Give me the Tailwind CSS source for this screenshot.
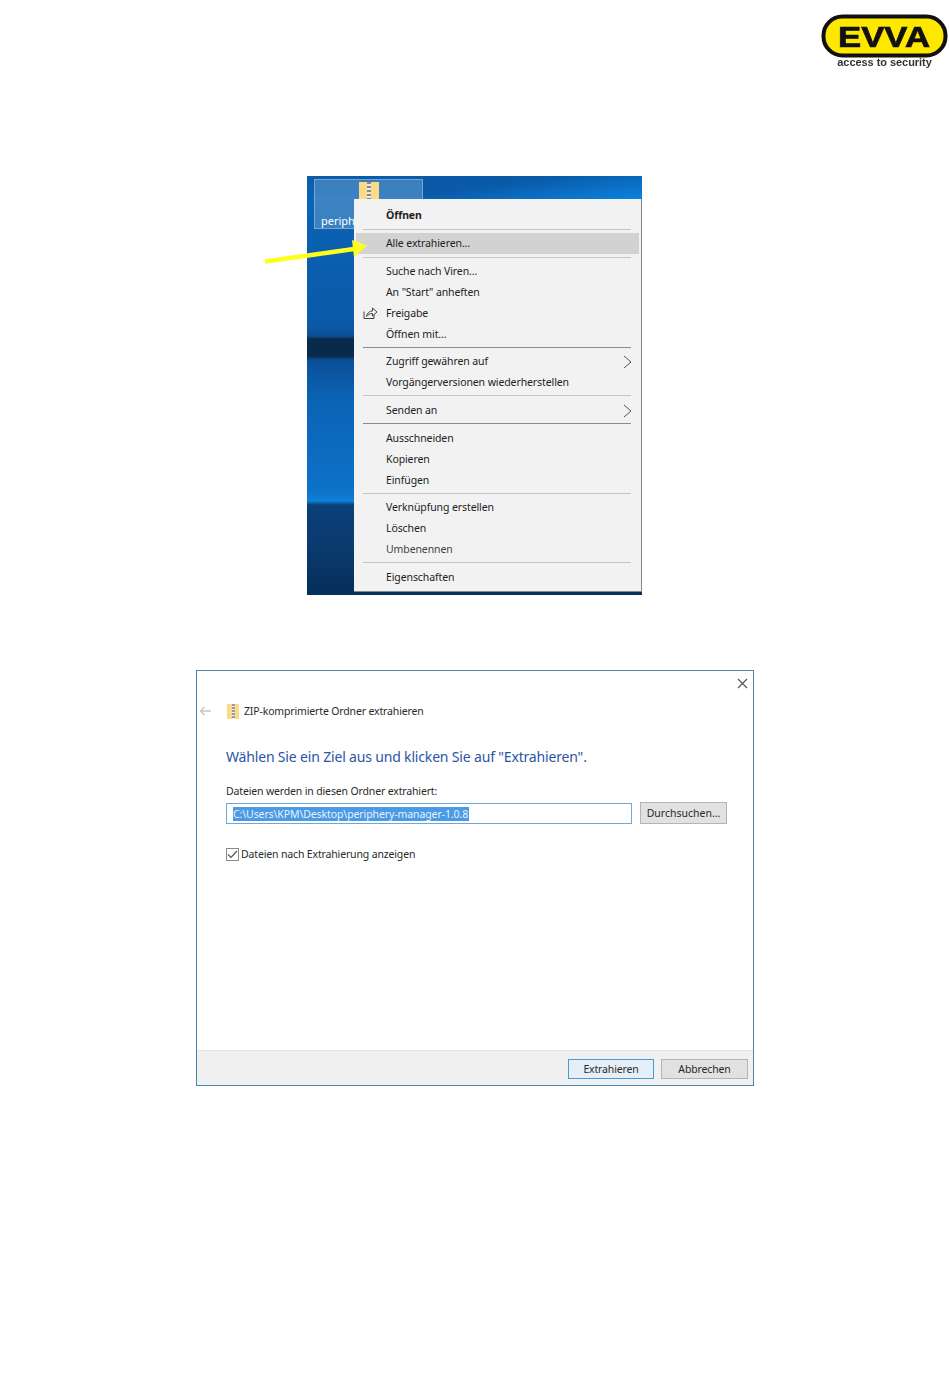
<!DOCTYPE html>
<html lang="de">
<head>
  <meta charset="UTF-8" />
  <title>periphery-manager extrahieren</title>
  <script src="https://cdn.jsdelivr.net/npm/@tailwindcss/browser@4"></script>
</head>
<body class="bg-white font-['Open_Sans',sans-serif] text-[#1a1a1a]">
  <div class="relative w-[950px] h-[1387px] flex flex-col items-center overflow-hidden">

    <!-- logo -->
    <header class="w-full h-[176px] flex justify-end pt-[14px] pr-[2px]">
      <div class="w-[127px] flex flex-col items-center blur-[0.4px]">
        <svg width="127" height="44" viewBox="0 0 127 44">
          <rect x="2.5" y="2.5" width="122" height="39" rx="19" fill="#ffe800" stroke="#111" stroke-width="4" />
          <text x="17" y="32.5" font-family="Liberation Sans" font-weight="700" font-size="29" textLength="92" lengthAdjust="spacingAndGlyphs" fill="#111" stroke="#111" stroke-width="0.7">EVVA</text>
        </svg>
        <span class="font-['Liberation_Sans',sans-serif] font-bold text-[11px] leading-[11px] mt-[-1px] tracking-[-0.05px] text-[#333]">access to security</span>
      </div>
    </header>

    <!-- context menu screenshot -->
    <section class="relative ml-[-1px] w-[335px] h-[419px] shrink-0 bg-[linear-gradient(180deg,#0a5ca8_0px,#0a64b4_22px,#0a5aa8_150px,#0b4f94_160px,#0a2a4c_163px,#0a2a4c_180px,#0b4f96_184px,#0b62b4_220px,#0d72c8_315px,#1080d8_325px,#0a3f78_329px,#0a3a70_370px,#06305a_415px)]">
      <div class="absolute left-[116px] top-0 w-[219px] h-[23px] bg-[linear-gradient(172deg,#0a5aa8_35%,#0a82de_100%)]"></div>
      <div class="absolute left-[7px] top-[3px] w-[109px] h-[50px] bg-white/20 border border-white/30 pl-[6px] pt-[34px] text-[11px] leading-[14px] text-white font-['Noto_Sans',sans-serif]">periph</div>
      <div class="absolute left-[52px] top-[6px] w-[20px] h-[17px] bg-[#fbdb85] flex justify-center">
        <div class="w-[4px] h-full bg-[repeating-linear-gradient(180deg,#8a8a8a_0px,#8a8a8a_2px,#e8e8e8_2px,#e8e8e8_4px)]"></div>
      </div>

      <div class="absolute left-[47px] top-[23px] w-[288px] h-[393px] bg-[#f2f2f2] border-r border-b border-[#7a8a99] pt-[6px] text-[10.5px] tracking-[-0.1px] text-[#222] font-['Noto_Sans',sans-serif]">
        <div class="h-[21px] pl-[32px] flex items-center font-bold">Öffnen</div>
        <div class="mt-[3px] mb-[3px] ml-[9px] mr-[10px] h-px bg-[#c4c4c4]"></div>
        <div class="h-[21px] ml-[2px] mr-[2px] pl-[30px] flex items-center bg-[#d2d2d2]">Alle extrahieren...</div>
        <div class="mt-[3px] mb-[3px] ml-[9px] mr-[10px] h-px bg-[#c4c4c4]"></div>
        <div class="h-[21px] pl-[32px] flex items-center">Suche nach Viren...</div>
        <div class="h-[21px] pl-[32px] flex items-center">An "Start" anheften</div>
        <div class="relative h-[21px] pl-[32px] flex items-center">
          <svg class="absolute left-[9px] top-[3px]" width="15" height="14" viewBox="0 0 15 14" fill="none" stroke="#444" stroke-width="1">
            <path d="M1 5.5V12.5H11V9" />
            <path d="M3.5 10.5C4 7 6.5 5 9.5 5V2L14 6L9.5 10V7.5C7 7.5 5 8.5 3.5 10.5Z" />
          </svg>
          Freigabe
        </div>
        <div class="h-[21px] pl-[32px] flex items-center">Öffnen mit...</div>
        <div class="mt-[2px] mb-[3px] ml-[9px] mr-[10px] h-px bg-[#8c8c8c]"></div>
        <div class="h-[21px] pl-[32px] pr-[9px] flex items-center justify-between">
          Zugriff gewähren auf
          <svg width="9" height="14" viewBox="0 0 9 14" fill="none" stroke="#555" stroke-width="1"><path d="M1 1L8 7L1 13" /></svg>
        </div>
        <div class="h-[21px] pl-[32px] flex items-center">Vorgängerversionen wiederherstellen</div>
        <div class="mt-[2px] mb-[4px] ml-[9px] mr-[10px] h-px bg-[#c4c4c4]"></div>
        <div class="h-[21px] pl-[32px] pr-[9px] flex items-center justify-between">
          Senden an
          <svg width="9" height="14" viewBox="0 0 9 14" fill="none" stroke="#555" stroke-width="1"><path d="M1 1L8 7L1 13" /></svg>
        </div>
        <div class="mt-[2px] mb-[4px] ml-[9px] mr-[10px] h-px bg-[#8c8c8c]"></div>
        <div class="h-[21px] pl-[32px] flex items-center">Ausschneiden</div>
        <div class="h-[21px] pl-[32px] flex items-center">Kopieren</div>
        <div class="h-[21px] pl-[32px] flex items-center">Einfügen</div>
        <div class="mt-[2px] mb-[3px] ml-[9px] mr-[10px] h-px bg-[#c4c4c4]"></div>
        <div class="h-[21px] pl-[32px] flex items-center">Verknüpfung erstellen</div>
        <div class="h-[21px] pl-[32px] flex items-center">Löschen</div>
        <div class="h-[21px] pl-[32px] flex items-center text-[#444]">Umbenennen</div>
        <div class="mt-[2px] mb-[4px] ml-[9px] mr-[10px] h-px bg-[#c4c4c4]"></div>
        <div class="h-[21px] pl-[32px] flex items-center">Eigenschaften</div>
      </div>

      <!-- arrow annotation -->
      <svg class="absolute left-[-43px] top-[62px]" width="104" height="26" viewBox="0 0 104 26">
        <path d="M1 23.5L90 11" stroke="#ffff1e" stroke-width="4.5" fill="none" />
        <path d="M88 2L103 7.5L90 19Z" fill="#ffff1e" />
      </svg>
    </section>

    <!-- extract dialog -->
    <section class="mt-[75px] w-[558px] h-[416px] shrink-0 border border-[#4d84aa] bg-white flex flex-col text-[10.5px] tracking-[-0.15px] font-['Noto_Sans',sans-serif] text-[#2a2a2a]">
      <div class="h-[24px] flex items-center justify-end pr-[5px]">
        <svg width="11" height="11" viewBox="0 0 11 11" fill="none" stroke="#555" stroke-width="1.2"><path d="M1 1L10 10M10 1L1 10" /></svg>
      </div>
      <div class="h-[32px] flex items-center pl-[2px]">
        <svg width="12" height="10" viewBox="0 0 12 10" fill="none" stroke="#c6c6c6" stroke-width="1.4"><path d="M12 5H1.5M5.5 1L1.5 5L5.5 9" /></svg>
        <div class="ml-[16px] w-[12px] h-[15px] bg-[#fbdb85] flex justify-center">
          <div class="w-[3px] h-full bg-[repeating-linear-gradient(180deg,#9a9a9a_0px,#9a9a9a_2px,#eeeeee_2px,#eeeeee_3px)]"></div>
        </div>
        <span class="ml-[5px] pt-[2px]">ZIP-komprimierte Ordner extrahieren</span>
      </div>

      <div class="flex-1 pl-[29px] pr-[26px]">
        <h1 class="mt-[20px] h-[20px] leading-[20px] text-[14px] tracking-[-0.17px] text-[#2a55a5]">Wählen Sie ein Ziel aus und klicken Sie auf "Extrahieren".</h1>
        <div class="mt-[14px] h-[20px] leading-[20px]">Dateien werden in diesen Ordner extrahiert:</div>
        <div class="mt-[1px] flex items-end gap-[8px]">
          <div class="w-[406px] h-[21px] border border-[#6fa8d6] pl-[6px] flex items-center">
            <span class="h-[14px] leading-[14px] pr-[1px] tracking-[-0.1px] bg-[#4a9ae6] text-[#e8f2fb]">C:\Users\KPM\Desktop\periphery-manager-1.0.8</span>
          </div>
          <div class="w-[87px] h-[22px] pt-[2px] border border-[#b4b4b4] bg-[#e1e1e1] tracking-normal flex items-center justify-center">Durchsuchen...</div>
        </div>
        <div class="mt-[20px] h-[20px] flex items-center">
          <div class="w-[13px] h-[13px] border border-[#8a8a8a] flex items-center justify-center">
            <svg width="11" height="9" viewBox="0 0 11 9" fill="none" stroke="#555" stroke-width="1.2"><path d="M1 4.5L4 7.5L10 1" /></svg>
          </div>
          <span class="ml-[2px] pt-[2px]">Dateien nach Extrahierung anzeigen</span>
        </div>
      </div>

      <footer class="h-[35px] bg-[#f0f0f0] border-t border-[#e0e0e0] pt-[8px] pr-[5px] flex justify-end gap-[7px]">
        <div class="w-[86px] h-[20px] pt-[2px] border border-[#4a9ad8] bg-[#e5eff7] flex items-center justify-center">Extrahieren</div>
        <div class="w-[87px] h-[20px] pt-[2px] border border-[#b4b4b4] bg-[#e1e1e1] flex items-center justify-center">Abbrechen</div>
      </footer>
    </section>
  </div>
</body>
</html>
